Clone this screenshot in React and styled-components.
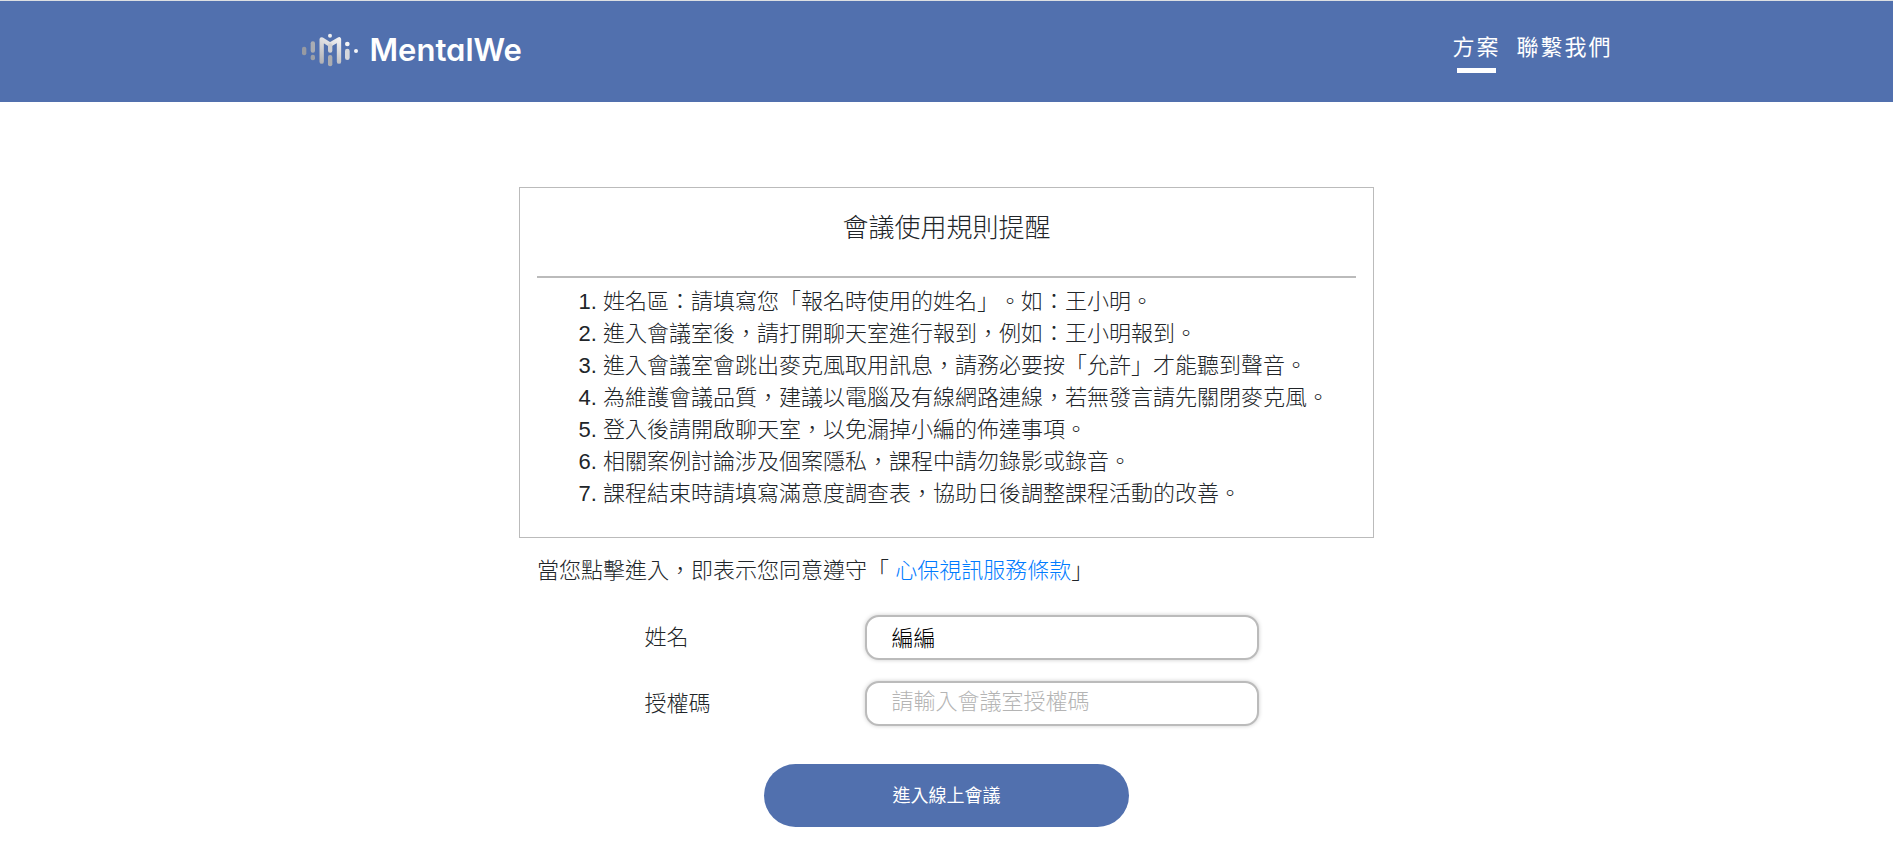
import { useState } from 'react';
import styled, { createGlobalStyle } from 'styled-components';

const GlobalStyle = createGlobalStyle`
	* {
		box-sizing: border-box;
	}

	body {
		margin: 0;
		background: #fff;
		color: #212529;
		font-family: 'Liberation Sans', 'Noto Sans CJK TC', sans-serif;
		font-size: 22px;
		font-weight: 300;
		line-height: 32px;
		text-spacing-trim: space-all;
	}
`;

const rules = [
	'姓名區：請填寫您「報名時使用的姓名」。如：王小明。',
	'進入會議室後，請打開聊天室進行報到，例如：王小明報到。',
	'進入會議室會跳出麥克風取用訊息，請務必要按「允許」才能聽到聲音。',
	'為維護會議品質，建議以電腦及有線網路連線，若無發言請先關閉麥克風。',
	'登入後請開啟聊天室，以免漏掉小編的佈達事項。',
	'相關案例討論涉及個案隱私，課程中請勿錄影或錄音。',
	'課程結束時請填寫滿意度調查表，協助日後調整課程活動的改善。',
];

const Header = styled.header`
	border-top: 1px solid #dcdfe2;
	background: #5170ae;
`;

const HeaderInner = styled.div`
	display: flex;
	justify-content: space-between;
	align-items: flex-start;
	max-width: 1348px;
	min-height: 101px;
	margin: 0 auto;
	padding: 31px 8px 0 29px;
`;

const Logo = styled.a`
	display: flex;
	align-items: center;
	gap: 12px;
	color: #fff;
	text-decoration: none;

	& svg {
		width: 56px;
		height: 34px;
	}
`;

const LogoText = styled.span`
	font-family: Inter, sans-serif;
	font-feature-settings: 'cv11';
	font-size: 31px;
	font-weight: 600;
	line-height: 36px;
`;

const Nav = styled.nav`
	display: flex;
	gap: 16px;
`;

const NavLink = styled.a`
	color: #fff;
	font-weight: 400;
	letter-spacing: 2px;
	text-decoration: none;

	&::after {
		content: '';
		display: block;
		width: 39px;
		height: 5px;
		margin: 4px auto 0;
		background: ${({ $active }) => ($active ? '#fff' : 'transparent')};
	}
`;

const Main = styled.main`
	max-width: 855px;
	margin: 85px auto 0;
`;

const RulesBox = styled.section`
	padding: 16px 17px 27px;
	border: 1px solid #bbb;
`;

const RulesTitle = styled.h1`
	margin: 0;
	padding: 6px 0 30px;
	border-bottom: 2px solid #bbb;
	font-size: 26px;
	font-weight: 300;
	line-height: 36px;
	text-align: center;
`;

const RulesList = styled.ol`
	margin: 0;
	padding: 8px 0 0 66px;
`;

const Terms = styled.p`
	margin: 17px 18px 28px;

	& a {
		color: #007bff;
		text-decoration: none;
	}
`;

const Form = styled.form`
	display: flex;
	flex-direction: column;
	align-items: center;
	gap: 21px;
`;

const Field = styled.div`
	display: grid;
	grid-template-columns: 221px 1fr;
	align-items: center;
	width: 73%;
	padding-left: 10px;
`;

const Input = styled.input`
	width: 100%;
	height: 45px;
	padding: 0 24px 3px;
	border: 2px solid #bbb;
	border-radius: 14px;
	box-shadow: 0 0 4px #ccc;
	background: #fff;
	color: #000;
	font: inherit;
	outline: none;

	&::placeholder {
		color: #b4b4b4;
		opacity: 1;
	}
`;

const SubmitButton = styled.button`
	width: 365px;
	height: 63px;
	margin-top: 17px;
	padding: 0;
	border: none;
	border-radius: 32px;
	background: #5170ae;
	color: #fff;
	font: inherit;
	font-size: 18px;
	font-weight: 400;
	cursor: pointer;
`;

const LogoMark = () => (
	<svg viewBox="0 0 168 102" aria-hidden="true">
		<defs>
			<linearGradient
				id="mark"
				gradientUnits="userSpaceOnUse"
				x1="30"
				y1="100"
				x2="80"
				y2="0"
			>
				<stop offset="0" stopColor="#a2a2a6" />
				<stop offset="1" stopColor="#f2f2f4" />
			</linearGradient>
		</defs>
		<rect x="0" y="41" width="13" height="26" rx="6" fill="#969aa3" />
		<rect x="26" y="25" width="13" height="34" rx="6" fill="#a9acb3" />
		<rect x="26" y="65" width="13" height="17" rx="6" fill="#9da0a7" />
		<circle cx="84" cy="8" r="6" fill="#eeeeef" />
		<path
			d="M59 86V19L84 35L111 19V86"
			fill="none"
			stroke="url(#mark)"
			strokeWidth="13"
			strokeLinecap="round"
			strokeLinejoin="round"
		/>
		<rect x="78" y="31" width="13" height="28" rx="6" fill="#cfcfd2" />
		<rect x="78" y="66" width="13" height="34" rx="6" fill="#acadb1" />
		<circle cx="136" cy="33" r="7" fill="#f3f4f6" />
		<rect x="129" y="47" width="14" height="34" rx="7" fill="#d6d8dc" />
		<circle cx="162" cy="54" r="6" fill="#f5f6f9" />
	</svg>
);

const App = () => {
	const [name, setName] = useState('編編');
	const [code, setCode] = useState('');

	return (
		<div lang="zh-Hant">
			<GlobalStyle />
			<Header>
				<HeaderInner>
					<Logo href="#">
						<LogoMark />
						<LogoText>MentalWe</LogoText>
					</Logo>
					<Nav>
						<NavLink href="#plans" $active>
							方案
						</NavLink>
						<NavLink href="#contact">聯繫我們</NavLink>
					</Nav>
				</HeaderInner>
			</Header>
			<Main>
				<RulesBox>
					<RulesTitle>會議使用規則提醒</RulesTitle>
					<RulesList>
						{rules.map((rule) => (
							<li key={rule}>{rule}</li>
						))}
					</RulesList>
				</RulesBox>
				<Terms>
					當您點擊進入，即表示您同意遵守「 <a href="#terms">心保視訊服務條款</a>」
				</Terms>
				<Form onSubmit={(event) => event.preventDefault()}>
					<Field>
						<label htmlFor="name">姓名</label>
						<Input
							id="name"
							value={name}
							onChange={({ target }) => setName(target.value)}
						/>
					</Field>
					<Field>
						<label htmlFor="code">授權碼</label>
						<Input
							id="code"
							placeholder="請輸入會議室授權碼"
							value={code}
							onChange={({ target }) => setCode(target.value)}
						/>
					</Field>
					<SubmitButton type="submit">進入線上會議</SubmitButton>
				</Form>
			</Main>
		</div>
	);
};

export default App;
